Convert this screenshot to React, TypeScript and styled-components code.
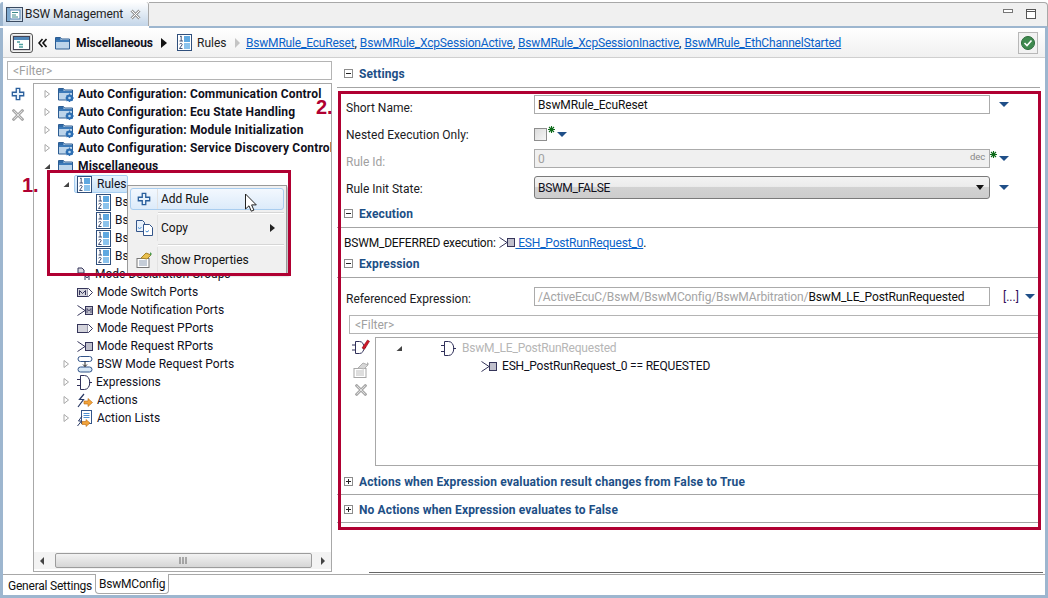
import React from "react";
import styled, { createGlobalStyle } from "styled-components";

const Global = createGlobalStyle`
  html, body { margin: 0; padding: 0; background: #fff; }
  body { font-family: Roboto, "Liberation Sans", sans-serif; font-size: 12px; color: #10101c; }
  * { box-sizing: border-box; }
`;

const RED = "#b00032";
const HEAD = "#1d4f86";

const Frame = styled.div`
  position: relative; width: 1048px; height: 598px; overflow: hidden;
  display: flex; flex-direction: column; background: #fff;
`;
const TabStrip = styled.div`
  height: 28px; flex: none; display: flex; padding-top: 2px; background: #fff;
`;
const TabStripInner = styled.div`
  flex: 1; display: flex; align-items: flex-start; background: #f0f0f0;
  border-top: 1px solid #a8a8a8; border-right: 1px solid #a8a8a8; border-radius: 0 4px 0 0;
  border-bottom: 2px solid #9db6cf; height: 26px;
`;
const EditorTab = styled.div`
  width: 149px; height: 24px; flex: none; display: flex; align-items: center; padding-left: 3px; gap: 1px;
  background: linear-gradient(#ffffff, #e6eef6 40%, #c3d5e8);
  border-left: 3px solid #9db6cf; border-right: 1px solid #a8a8a8; border-radius: 3px 3px 0 0;
  color: #222; white-space: nowrap;
`;
const TabLabel = styled.span` flex: none; width: 104px; letter-spacing: -.05px; `;
const WindowControls = styled.div`
  margin-left: auto; display: flex; align-items: flex-start; gap: 13px; padding: 6px 11px 0 0;
`;
const Editor = styled.div`
  flex: 1; min-height: 0; display: flex; flex-direction: column;
  border-left: 3px solid #9db6cf; border-right: 3px solid #9db6cf; border-bottom: 3px solid #9db6cf;
`;
const Breadcrumb = styled.div`
  height: 30px; flex: none; display: flex; align-items: center; padding: 0 7px 0 7px;
  background: linear-gradient(#ffffff, #f0f0f0); border-bottom: 1px solid #cfcfcf;
`;
const LayoutButton = styled.div`
  width: 23px; height: 20px; display: flex; align-items: center; justify-content: center;
  border: 1px solid #555; border-radius: 3px; background: #d8d8d8; box-shadow: inset 0 0 0 1px #f4f4f4;
`;
const CrumbBold = styled.span` font-weight: 700; width: 85px; flex: none; letter-spacing: -.1px; `;
const CrumbText = styled.span` width: 38px; flex: none; color: #222; `;
const LinkList = styled.div` display: flex; margin-left: 6px; white-space: pre; `;
const LinkText = styled.a` color: #0a62c9; text-decoration: underline; letter-spacing: -.19px; `;
const StatusButton = styled.div`
  margin-left: auto; width: 20px; height: 22px; display: flex; align-items: center; justify-content: center;
  border: 1px solid #b8b8b8; background: #f2f2f2;
`;
const Spaced = styled.span<{ $l?: number; $r?: number; $up?: number }>`
  display: inline-flex; flex: none; margin-left: ${p => p.$l ?? 0}px; margin-right: ${p => p.$r ?? 0}px;
  margin-top: ${p => -(p.$up ?? 0)}px;
`;
const Muted = styled.span` display: inline-flex; filter: grayscale(1) opacity(.65); `;
const Body = styled.div` flex: 1; min-height: 0; display: flex; `;
const LeftPane = styled.div`
  width: 334px; flex: none; display: flex; flex-direction: column; padding: 3px 5px 2px 4px; gap: 3px;
`;
const FilterBox = styled.div`
  height: 19px; flex: none; display: flex; align-items: center; padding-left: 5px; color: #a0a0a0;
  border: 1px solid #b4b4b4; background: #fff;
`;
const OpenFilter = styled(FilterBox)` border-right: none; margin: 9px 2px 0 12px; `;
const TreeArea = styled.div` flex: 1; min-height: 0; display: flex; `;
const ToolColumn = styled.div<{ $gap: number; $top: number; $pr: number }>`
  width: 26px; flex: none; display: flex; flex-direction: column; align-items: center;
  gap: ${p => p.$gap}px; padding-top: ${p => p.$top}px; padding-right: ${p => p.$pr}px;
`;
const TreeBox = styled.div`
  flex: 1; min-width: 0; display: flex; flex-direction: column; border: 1px solid #a8a8a8; background: #fff;
`;
const TreeList = styled.div` flex: 1; min-height: 0; overflow: hidden; padding-top: 1px; `;
const Row = styled.div<{ $level: number; $bold?: boolean }>`
  height: 18px; display: flex; align-items: center; white-space: nowrap;
  padding-left: ${p => 8 + p.$level * 19}px; font-weight: ${p => (p.$bold ? 700 : 400)};
  letter-spacing: ${p => (p.$bold ? ".17px" : "0")};
`;
const Twisty = styled.span` width: 10px; height: 10px; flex: none; display: flex; margin-right: 6px; `;
const RowBody = styled.span<{ $selected?: boolean }>`
  display: inline-flex; align-items: center; gap: ${p => (p.$selected ? 5 : 4)}px; height: 18px;
  ${p => p.$selected ? `
    margin: 0 0 0 -3px; padding: 0 1px 0 2px; border: 1px solid #a6cdf0; border-radius: 2px;
    background: linear-gradient(#e8f3fd, #c9e2f8);
  ` : ""}
`;
const HScroll = styled.div`
  height: 17px; flex: none; display: flex; align-items: center; margin-bottom: 2px; background: #f3f3f3;
  padding: 0 6px;
`;
const Thumb = styled.div`
  flex: 1; height: 15px; margin: 0 9px 0 11px; border: 1px solid #9c9c9c; border-radius: 2px;
  background: linear-gradient(#f2f2f2, #d6d6d6); display: flex; align-items: center; justify-content: center;
`;
const RightPane = styled.div` flex: 1; min-width: 0; display: flex; flex-direction: column; padding-right: 5px; `;
const SectionHeader = styled.div<{ $mt?: number; $lift?: boolean }>`
  height: 26px; flex: none; display: flex; align-items: center; gap: 6px; padding-left: 7px;
  padding-bottom: ${p => (p.$lift ? 2 : 0)}px;
  margin-top: ${p => p.$mt ?? 0}px; border-bottom: 1px solid #a4a4a4;
  color: ${HEAD}; font-weight: 700; letter-spacing: .12px;
`;
const Toggle = styled.span`
  position: relative; width: 9px; height: 9px; flex: none; border: 1px solid #8c8c8c; background: #fff;
`;
const Minus = styled.i`
  position: absolute; left: 1px; right: 1px; top: 3px; height: 1px; background: #222;
`;
const Plus = styled.i`
  position: absolute; top: 1px; bottom: 1px; left: 3px; width: 1px; background: #222;
`;
const FormRow = styled.div<{ $mt: number; $h: number }>`
  display: flex; align-items: center; flex: none; height: ${p => p.$h}px; margin-top: ${p => p.$mt}px;
  padding-left: 9px;
`;
const Label = styled.span<{ $off?: boolean; $drop?: number }>`
  width: 188px; flex: none; color: ${p => (p.$off ? "#a0a0a0" : "#1a1a22")}; padding-top: ${p => p.$drop ?? 1}px;
`;
const Field = styled.div<{ $off?: boolean }>`
  width: 456px; height: 100%; flex: none; display: flex; align-items: center; padding: 0 3px; white-space: nowrap; overflow: hidden;
  border: 1px solid #ababab; letter-spacing: -.13px;
  background: ${p => (p.$off ? "#f0f0f0" : "#fff")}; color: ${p => (p.$off ? "#a0a0a0" : "#111")};
`;
const Dec = styled.span` margin-left: auto; font-size: 9.5px; color: #888; margin-top: -5px; margin-right: 1px; `;
const Grey = styled.span` color: #a4a4a4; `;
const Select = styled.div`
  width: 456px; height: 100%; flex: none; display: flex; align-items: center; justify-content: space-between; padding: 0 5px 0 3px;
  border: 1px solid #7a7a7a; border-radius: 3px; letter-spacing: -.3px; background: linear-gradient(#f3f3f3, #ececec 45%, #d2d2d2 50%, #cdcdcd);
`;
const Check = styled.span`
  width: 13px; height: 13px; flex: none; border: 1px solid #8e8e8e; background: linear-gradient(135deg, #dcdcdc, #f6f6f6);
`;
const ExecLine = styled.div`
  height: 24px; flex: none; display: flex; align-items: center; padding: 5px 0 0 7px; white-space: pre; color: #111; letter-spacing: -.2px;
`;
const ExprArea = styled.div` display: flex; height: 129px; flex: none; margin: 3px 2px 0 12px; `;
const ExprTree = styled.div`
  flex: 1; border: 1px solid #a8a8a8; border-right: none; overflow: hidden; padding-top: 1px;
`;
const ExprRow = styled.div<{ $pl: number }>`
  height: 18px; display: flex; align-items: center; gap: 5px; padding-left: ${p => p.$pl}px; white-space: nowrap; letter-spacing: -.18px;
`;
const ExprTwisty = styled.span` width: 10px; height: 10px; display: flex; margin-right: 32px; `;
const DisabledText = styled.span` color: #b6b6b6; margin-left: 1px; letter-spacing: -.2px; `;
const BottomEdge = styled.div` margin-top: auto; margin-left: 32px; margin-right: -3px; height: 2px; border-top: 1px solid #666; `;
const BottomTabs = styled.div`
  height: 21px; flex: none; display: flex; border-top: 1px solid #a8a8a8; background: #fff;
`;
const PageTab = styled.div<{ $active?: boolean }>`
  display: flex; align-items: center; height: 20px; padding: 1px 3px 0 5px; color: #111; letter-spacing: -.22px;
  ${p => p.$active ? `
    margin-top: -1px; height: 20px; padding: 1px 3px 0 3px; background: #fff;
    border: 1px solid #a8a8a8; border-top: none; border-radius: 0 0 4px 4px;
  ` : ""}
`;
const RedBox = styled.div<{ $l: number; $t: number; $w: number; $h: number }>`
  position: absolute; left: ${p => p.$l}px; top: ${p => p.$t}px; width: ${p => p.$w}px; height: ${p => p.$h}px;
  border: 3px solid ${RED}; pointer-events: none;
`;
const Callout = styled.span<{ $l: number; $t: number }>`
  position: absolute; left: ${p => p.$l}px; top: ${p => p.$t}px; color: ${RED};
  font: 700 20px/20px "Liberation Sans", sans-serif;
`;
const Menu = styled.div`
  position: absolute; left: 127px; top: 185px; width: 160px; height: 89px; padding: 2px;
  background: #f0f0f0; border: 1px solid #9a9a9a; box-shadow: 2px 2px 2px rgba(0,0,0,.25);
  display: flex; flex-direction: column;
`;
const MenuItem = styled.div<{ $h: number; $active?: boolean }>`
  position: relative; height: ${p => p.$h}px; flex: none; display: flex; align-items: center; color: #111;
  border: 1px solid ${p => (p.$active ? "#a9cdef" : "transparent")}; border-radius: 3px;
  background: ${p => (p.$active ? "linear-gradient(#f3f8fe, #dcebfa)" : "transparent")};
`;
const MenuIcon = styled.span`
  width: 27px; height: 100%; flex: none; display: flex; align-items: center; justify-content: center;
  border-right: 1px solid #e2e2e2; margin-right: 3px;
`;
const MenuSep = styled.div`
  height: 2px; flex: none; margin: 2px 0 0 28px; border-top: 1px solid #d6d6d6; border-bottom: 1px solid #fff;
`;
const MenuArrow = styled.span`
  position: absolute; right: 8px; top: 50%; margin-top: -4px; width: 0; height: 0;
  border-left: 5px solid #222; border-top: 4px solid transparent; border-bottom: 4px solid transparent;
`;
const Cursor = styled.svg` position: absolute; left: 244px; top: 193px; `;
const EllipsisBtn = styled.span` color: #30105a; margin: 0 5px 0 13px; `;

/* ---------- icons ---------- */
const Arrow = () => (
  <Spaced><svg width="12" height="7" viewBox="0 0 12 7"><path d="M1 1h10L6 6z" fill="#1f4f88" /></svg></Spaced>
);
const Closed = () => <svg width="10" height="10" viewBox="0 0 10 10"><path d="M3 1.500 7.500 5 3 8.500z" fill="#fff" stroke="#a8a8a8" /></svg>;
const Open = () => <svg width="10" height="10" viewBox="0 0 10 10"><path d="M8 3v5H2.500z" fill="#444" /></svg>;
const FolderIcon = ({ gear }: { gear?: boolean }) => (
  <svg width="16" height="16" viewBox="0 0 16 16">
    <path d="M.5 2.500h5l1 1.500h8v10H.5z" fill="#bcd4ea" stroke="#2c5c92" />
    <rect x="1" y="3" width="4.500" height="2" fill="#2e6aa8" />
    <rect x="1" y="5" width="13" height="2" fill="#3d7ab8" />
    {gear && <><circle cx="11.500" cy="12" r="3.600" fill="#2d6fb4" /><circle cx="11.500" cy="12" r="1.300" fill="#bcd9f2" /><path d="M11.500 7.500v1.400M11.500 15v1M7.500 12h1M14.700 12H16M8.700 9.200l.9.9M13.500 14l.9.9M14.300 9.200l-.9.9M9.600 14l-.9.9" stroke="#2d6fb4" /></>}
  </svg>
);
const ListIcon = () => (
  <svg width="15" height="17" viewBox="0 0 15 17">
    <rect x=".5" y=".5" width="14" height="16" fill="#fff" stroke="#2f4f7c" />
    <rect x="7" y="2" width="6" height="6" fill="#5fa8e0" />
    <rect x="7" y="9" width="6" height="6" fill="#8cc3ec" />
    <path d="M3 2.500 4.200 2v5M2.500 7H6M2.500 10.200c1-1.200 3-.8 2.600.6L2.500 14.500h3" fill="none" stroke="#2b3f66" strokeWidth=".9" />
  </svg>
);
const PortBox = ({ m, out }: { m?: boolean; out?: boolean }) => (
  <svg width="16" height="11" viewBox="0 0 16 11">
    {out ? (
      <>
        <rect x=".5" y="1.500" width="10" height="8" fill="#d4d4dc" stroke="#35355a" />
        <path d="M10.500 1.500h1l4 4-4 4h-1" fill="#fff" stroke="#35355a" />
        {m && <path d="M2.500 8V3.500L5.500 6.500 8.500 3.500V8" fill="none" stroke="#35355a" />}
      </>
    ) : (
      <>
        <path d="M.5 .5l7.500 5-7.500 5" fill="none" stroke="#35355a" />
        <rect x="8.500" y="1.500" width="7" height="8" fill="#c0c0cc" stroke="#35355a" />
        {m && <path d="M10 8V3.500L12 6 14 3.500V8" fill="none" stroke="#35355a" strokeWidth=".8" />}
      </>
    )}
  </svg>
);
const GateIcon = () => (
  <svg width="15" height="15" viewBox="0 0 15 15">
    <path d="M3.500 .5h4c7 0 7 14 0 14h-4z" fill="#fff" stroke="#30305a" />
    <path d="M0 4.500h3.500M0 10.500h3.500M12 7.500h3" stroke="#30305a" />
  </svg>
);
const RequestIcon = () => (
  <svg width="16" height="17" viewBox="0 0 16 17">
    <rect x="1" y=".5" width="14" height="5" rx="2.500" fill="#fff" stroke="#33558a" />
    <rect x="1" y="11" width="14" height="5" rx="2.500" fill="#d8e8f6" stroke="#33558a" />
    <path d="M8 5.500v5M6 8.500l2 2 2-2" fill="none" stroke="#222" />
  </svg>
);
const ActionIcon = () => (
  <svg width="16" height="15" viewBox="0 0 16 15">
    <path d="M7 1 2.500 6.500h4L1 14" fill="none" stroke="#2a3a66" strokeWidth="1.200" />
    <path d="M7 8h4V5.500l4.500 4-4.500 4V11H7z" fill="#f2a33a" stroke="#b86a10" strokeWidth=".6" />
  </svg>
);
const ActionListIcon = () => (
  <svg width="16" height="17" viewBox="0 0 16 17">
    <rect x="4.500" y=".5" width="10" height="13" fill="#fff" stroke="#33558a" />
    <path d="M6.500 3.500h6M6.500 5.500h6M6.500 7.500h6" stroke="#4f8fd0" />
    <path d="M5 6 1.500 11h3L.5 16" fill="none" stroke="#2a3a66" />
    <path d="M5 11.500h4V9.500l4 3.500-4 3.500v-2H5z" fill="#f2a33a" stroke="#b86a10" strokeWidth=".6" />
  </svg>
);
const DeclIcon = () => (
  <svg width="14" height="14" viewBox="0 0 14 14">
    <path d="M1 1h4l2 2v3H1z" fill="#d8d8e0" stroke="#35355a" />
    <path d="M8 13V8.500l2 2.500 2-2.500V13" fill="none" stroke="#35355a" />
  </svg>
);
const PlusIcon = ({ size = 14 }: { size?: number }) => (
  <svg width={size} height={size} viewBox="0 0 16 16">
    <path d="M6 1.500h4V6h4.500v4H10v4.500H6V10H1.500V6H6z" fill="#e8f2fb" stroke="#2a5f9c" strokeWidth="1.500" />
  </svg>
);
const CrossIcon = () => (
  <svg width="12" height="12" viewBox="0 0 14 14">
    <path d="M2 2l10 10M12 2 2 12" stroke="#a8a8a8" strokeWidth="3.400" strokeLinecap="square" />
    <path d="M2 2l10 10M12 2 2 12" stroke="#e8e8e8" strokeWidth="1" />
  </svg>
);
const Asterisk = () => (
  <svg width="7" height="7" viewBox="0 0 7 7">
    <path d="M3.500 0v7M0 3.500h7M1 1l5 5M6 1 1 6" stroke="#0c6a18" strokeWidth="1.100" />
  </svg>
);
const EditorGlyph = () => (
  <svg width="18" height="17" viewBox="0 0 18 17">
    <rect x=".5" y="1.500" width="16" height="14" fill="#d2deea" stroke="#3a4a60" />
    <rect x="4" y="4" width="10" height="9" fill="#fff" stroke="#4f7fae" />
    <rect x="1" y="2" width="3" height="13" fill="#7ea9cf" />
    <path d="M6 6.500h6M6 9h4M6 11h6" stroke="#3f8a8a" />
  </svg>
);
const LayoutGlyph = () => (
  <svg width="17" height="14" viewBox="0 0 17 14">
    <rect x=".5" y=".5" width="16" height="13" fill="#fff" stroke="#445" />
    <rect x="1" y="1" width="15" height="3" fill="#4f86b8" />
    <path d="M4 6h3M6 8.500h4M6 11h4" stroke="#4fa0a0" strokeWidth="1.300" />
  </svg>
);
const CloseGlyph = () => (
  <svg width="11" height="11" viewBox="0 0 11 11">
    <path d="M1.500 1.500l8 8M9.500 1.500l-8 8" stroke="#9a9a9a" strokeWidth="3" />
    <path d="M1.500 1.500l8 8M9.500 1.500l-8 8" stroke="#fff" strokeWidth="1" />
  </svg>
);
const CopyIcon = () => (
  <svg width="17" height="16" viewBox="0 0 17 16">
    <path d="M.5.5h6l2 2v9h-8z" fill="#e7f0fa" stroke="#33558a" />
    <path d="M7.500 4.500h6l3 3v8h-9z" fill="#fff" stroke="#33558a" />
    <path d="M2 7.500l1.500 1 2-1M9.500 11l1.500 1 2-1.500" fill="none" stroke="#3e88d0" />
  </svg>
);
const PropsIcon = () => (
  <svg width="17" height="17" viewBox="0 0 17 17">
    <rect x="1" y="7.500" width="12" height="9" fill="#fff" stroke="#777" />
    <path d="M3 10h8M3 12h8M3 14h8" stroke="#8a9ab0" />
    <path d="M5 7 10 2l5 2-4 4z" fill="#e9bf4d" stroke="#a8842a" />
    <path d="M14 1l2 2-2 2z" fill="#4c9a4c" />
  </svg>
);
const RuleEditIcon = () => (
  <svg width="18" height="16" viewBox="0 0 18 16">
    <path d="M3.500 2.500h4c6 0 6 12 0 12h-4z" fill="#fff" stroke="#30305a" />
    <path d="M0 6h3.500M0 11h3.500M12 8.500h2" stroke="#30305a" />
    <path d="M10 9l5.500-8 2 1.300-5 8z" fill="#d01828" stroke="#8a1018" strokeWidth=".6" />
  </svg>
);

type Item = { label: string; level: number; icon: React.ReactNode; tw?: "c" | "o"; bold?: boolean; selected?: boolean };
const fg = <FolderIcon gear />;
const items: Item[] = [
  { label: "Auto Configuration: Communication Control", level: 0, icon: fg, tw: "c", bold: true },
  { label: "Auto Configuration: Ecu State Handling", level: 0, icon: fg, tw: "c", bold: true },
  { label: "Auto Configuration: Module Initialization", level: 0, icon: fg, tw: "c", bold: true },
  { label: "Auto Configuration: Service Discovery Control", level: 0, icon: fg, tw: "c", bold: true },
  { label: "Miscellaneous", level: 0, icon: <FolderIcon />, tw: "o", bold: true },
  { label: "Rules", level: 1, icon: <ListIcon />, tw: "o", selected: true },
  { label: "BswMRule_EcuReset", level: 2, icon: <ListIcon /> },
  { label: "BswMRule_XcpSessionActive", level: 2, icon: <ListIcon /> },
  { label: "BswMRule_XcpSessionInactive", level: 2, icon: <ListIcon /> },
  { label: "BswMRule_EthChannelStarted", level: 2, icon: <ListIcon /> },
  { label: "Mode Declaration Groups", level: 1, icon: <DeclIcon /> },
  { label: "Mode Switch Ports", level: 1, icon: <PortBox m out /> },
  { label: "Mode Notification Ports", level: 1, icon: <PortBox m /> },
  { label: "Mode Request PPorts", level: 1, icon: <PortBox out /> },
  { label: "Mode Request RPorts", level: 1, icon: <PortBox /> },
  { label: "BSW Mode Request Ports", level: 1, icon: <RequestIcon />, tw: "c" },
  { label: "Expressions", level: 1, icon: <GateIcon />, tw: "c" },
  { label: "Actions", level: 1, icon: <ActionIcon />, tw: "c" },
  { label: "Action Lists", level: 1, icon: <ActionListIcon />, tw: "c" },
];
const links = ["BswMRule_EcuReset", "BswMRule_XcpSessionActive", "BswMRule_XcpSessionInactive", "BswMRule_EthChannelStarted"];

const Head = ({ title, open, mt }: { title: string; open?: boolean; mt?: number }) => (
  <SectionHeader $mt={mt} $lift={open}>
    <Toggle><Minus />{!open && <Plus />}</Toggle>
    {title}
  </SectionHeader>
);

export default function App() {
  return (
    <Frame>
      <Global />
      <TabStrip>
        <EditorTab>
          <EditorGlyph />
          <TabLabel>BSW Management</TabLabel>
          <CloseGlyph />
        </EditorTab>
        <TabStripInner>
          <WindowControls>
            <svg width="10" height="4" viewBox="0 0 10 4"><rect x=".5" y=".5" width="9" height="3" fill="#fff" stroke="#777" /></svg>
            <svg width="10" height="10" viewBox="0 0 10 10"><rect x=".5" y=".5" width="9" height="9" fill="#fff" stroke="#555" /><path d="M0 2.500h10" stroke="#555" /></svg>
          </WindowControls>
        </TabStripInner>
      </TabStrip>
      <Editor>
        <Breadcrumb>
          <LayoutButton><LayoutGlyph /></LayoutButton>
          <Spaced $l={5}><svg width="9" height="10" viewBox="0 0 9 10"><path d="M4.500 1 1 5l3.500 4M8.500 1 5 5l3.500 4" fill="none" stroke="#111" strokeWidth="1.600" /></svg></Spaced>
          <Spaced $l={8} $r={5}><FolderIcon /></Spaced>
          <CrumbBold>Miscellaneous</CrumbBold>
          <svg width="6" height="10" viewBox="0 0 6 10"><path d="M0 0l6 5-6 5z" fill="#111" /></svg>
          <Spaced $l={10} $r={5}><ListIcon /></Spaced>
          <CrumbText>Rules</CrumbText>
          <svg width="5" height="10" viewBox="0 0 5 10"><path d="M0 0l5 5-5 5z" fill="#c4c4c4" /></svg>
          <LinkList>
            {links.map((l, i) => (
              <React.Fragment key={l}>
                <LinkText>{l}</LinkText>
                {i < links.length - 1 ? ", " : ""}
              </React.Fragment>
            ))}
          </LinkList>
          <StatusButton>
            <svg width="14" height="14" viewBox="0 0 14 14">
              <circle cx="7" cy="7" r="6.500" fill="#3f8a4f" stroke="#2a6a3a" />
              <path d="M3.500 7 6 9.500 10.500 4.500" fill="none" stroke="#fff" strokeWidth="1.600" />
            </svg>
          </StatusButton>
        </Breadcrumb>
        <Body>
          <LeftPane>
            <FilterBox>&lt;Filter&gt;</FilterBox>
            <TreeArea>
              <ToolColumn $gap={8} $top={4} $pr={4}>
                <PlusIcon />
                <CrossIcon />
              </ToolColumn>
              <TreeBox>
                <TreeList>
                  {items.map(it => (
                    <Row key={it.label} $level={it.level} $bold={it.bold}>
                      <Twisty>{it.tw === "c" ? <Closed /> : it.tw === "o" ? <Open /> : null}</Twisty>
                      <RowBody $selected={it.selected}>{it.icon}<span>{it.label}</span></RowBody>
                    </Row>
                  ))}
                </TreeList>
                <HScroll>
                  <svg width="4" height="8" viewBox="0 0 4 8"><path d="M4 0v8L0 4z" fill="#444" /></svg>
                  <Thumb>
                    <svg width="9" height="7" viewBox="0 0 9 7"><path d="M1 0v7M4 0v7M7 0v7" stroke="#666" /></svg>
                  </Thumb>
                  <svg width="4" height="8" viewBox="0 0 4 8"><path d="M0 0v8l4-4z" fill="#444" /></svg>
                </HScroll>
              </TreeBox>
            </TreeArea>
          </LeftPane>
          <RightPane>
            <Head title="Settings" open mt={4} />
            <FormRow $mt={7} $h={19}>
              <Label $drop={6}>Short Name:</Label>
              <Field>BswMRule_EcuReset</Field>
              <Spaced $l={8}><Arrow /></Spaced>
            </FormRow>
            <FormRow $mt={11} $h={18}>
              <Label>Nested Execution Only:</Label>
              <Check />
              <Spaced $l={1} $r={1} $up={9}><Asterisk /></Spaced>
              <Arrow />
            </FormRow>
            <FormRow $mt={6} $h={19}>
              <Label $off $drop={6}>Rule Id:</Label>
              <Field $off>0<Dec>dec</Dec></Field>
              <Spaced $up={9}><Asterisk /></Spaced>
              <Spaced $l={1}><Arrow /></Spaced>
            </FormRow>
            <FormRow $mt={8} $h={23}>
              <Label $drop={2}>Rule Init State:</Label>
              <Select>
                BSWM_FALSE
                <svg width="8" height="5" viewBox="0 0 8 5"><path d="M0 0h8L4 5z" fill="#111" /></svg>
              </Select>
              <Spaced $l={8}><Arrow /></Spaced>
            </FormRow>
            <Head title="Execution" open mt={3} />
            <ExecLine>
              BSWM_DEFERRED execution: <Spaced $l={1}><PortBox /></Spaced><LinkText> ESH_PostRunRequest_0</LinkText>.
            </ExecLine>
            <Head title="Expression" open />
            <FormRow $mt={9} $h={19}>
              <Label $drop={4}>Referenced Expression:</Label>
              <Field><Grey>/ActiveEcuC/BswM/BswMConfig/BswMArbitration/</Grey>BswM_LE_PostRunRequested</Field>
              <EllipsisBtn>[...]</EllipsisBtn>
              <Arrow />
            </FormRow>
            <OpenFilter>&lt;Filter&gt;</OpenFilter>
            <ExprArea>
              <ToolColumn $gap={6} $top={2} $pr={2}>
                <RuleEditIcon />
                <Muted><PropsIcon /></Muted>
                <CrossIcon />
              </ToolColumn>
              <ExprTree>
                <ExprRow $pl={18}>
                  <ExprTwisty><Open /></ExprTwisty>
                  <GateIcon />
                  <DisabledText>BswM_LE_PostRunRequested</DisabledText>
                </ExprRow>
                <ExprRow $pl={105}>
                  <PortBox />
                  ESH_PostRunRequest_0 == REQUESTED
                </ExprRow>
              </ExprTree>
            </ExprArea>
            <Head title="Actions when Expression evaluation result changes from False to True" mt={3} />
            <Head title="No Actions when Expression evaluates to False" mt={2} />
            <BottomEdge />
          </RightPane>
        </Body>
        <BottomTabs>
          <PageTab>General Settings</PageTab>
          <PageTab $active>BswMConfig</PageTab>
        </BottomTabs>
      </Editor>

      <Menu>
        <MenuItem $h={22} $active>
          <MenuIcon><PlusIcon size={14} /></MenuIcon>
          Add Rule
        </MenuItem>
        <MenuSep />
        <MenuItem $h={28}>
          <MenuIcon><CopyIcon /></MenuIcon>
          Copy
          <MenuArrow />
        </MenuItem>
        <MenuSep />
        <MenuItem $h={27}>
          <MenuIcon><PropsIcon /></MenuIcon>
          Show Properties
        </MenuItem>
      </Menu>
      <Cursor width="15" height="21" viewBox="0 0 15 21">
        <path d="M1.500 1v15l3.500-3.200 2.300 5.400 2.600-1.100-2.300-5.200h4.700z" fill="#fff" stroke="#222" />
      </Cursor>
      <RedBox $l={47} $t={170} $w={244} $h={106} />
      <RedBox $l={338} $t={91} $w={703} $h={439} />
      <Callout $l={22} $t={175}>1.</Callout>
      <Callout $l={316} $t={97}>2.</Callout>
    </Frame>
  );
}
